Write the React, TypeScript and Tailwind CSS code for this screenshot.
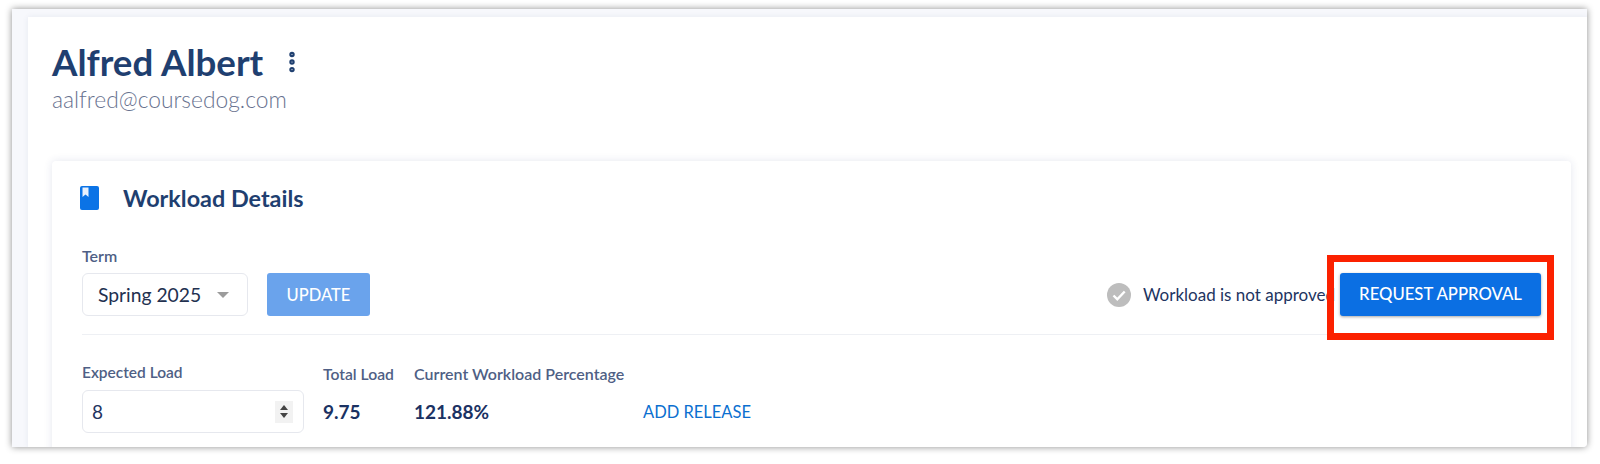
import { EllipsisVertical } from "lucide-react";

const lato = "font-['Lato','Noto_Sans',sans-serif]";

function BookIcon() {
  return (
    <svg width="19" height="24" viewBox="0 0 19 24" className="-ml-[2px] shrink-0">
      <rect x="0" y="0" width="19" height="24" rx="2" fill="#0b73e6" />
      <path d="M2.5 1.5h6v9.5l-3-2.4-3 2.4z" fill="#e8f1fd" />
    </svg>
  );
}

function CheckBadge() {
  return (
    <svg width="24" height="24" viewBox="0 0 24 24" className="shrink-0">
      <circle cx="12" cy="12" r="12" fill="#bdbdbd" />
      <path d="M6.5 12.5l3.8 3.8 7.4-7.8" fill="none" stroke="#ffffff" strokeWidth="2.4" />
    </svg>
  );
}

function Spinner() {
  return (
    <span className="flex h-[22px] w-[18px] flex-col items-center justify-center gap-[3px] bg-[#f2f2f2]">
      <span className="h-0 w-0 border-x-[4px] border-b-[5px] border-x-transparent border-b-[#444444]" />
      <span className="h-0 w-0 border-x-[4px] border-t-[5px] border-x-transparent border-t-[#444444]" />
    </span>
  );
}

export default function App() {
  return (
    <div className={`h-[464px] w-[1600px] overflow-hidden bg-white pl-3 pt-[9px] ${lato}`}>
      <div className="h-[438px] w-[1575px] overflow-hidden rounded-br-sm bg-[#f7f8fc] pl-4 pt-2 shadow-[0_0_7px_rgba(0,0,0,0.45)]">
        <div className="h-full bg-white pl-6 pr-4 pt-[22px] shadow-[0_0_6px_rgba(40,60,120,0.08)]">
          <div className="flex items-center gap-[16px]">
            <h1 className="text-[36.7px] font-bold leading-[46px] text-[#1f3f70]">Alfred Albert</h1>
            <EllipsisVertical size={26} strokeWidth={3} className="text-[#1f3f70]" />
          </div>
          <p className="text-[22.8px] font-light leading-[28px] text-[#68728f]">aalfred@coursedog.com</p>

          <div className="mt-[48px] h-[300px] rounded-sm bg-white px-[30px] pt-[22px] shadow-[0_0_8px_rgba(40,60,120,0.12)]">
            <div className="flex items-center gap-6">
              <BookIcon />
              <h2 className="text-[23.4px] font-bold leading-[30px] text-[#1f3f70]">Workload Details</h2>
            </div>

            <div className="mt-[33px] flex items-end justify-between border-b border-[#eef0f4] pb-[18px]">
              <div>
                <label className="block text-[16px] font-semibold leading-[20px] text-[#4f5f85]">Term</label>
                <div className="mt-[7px] flex items-center gap-[19px]">
                  <div className="flex h-[43px] w-[166px] items-center justify-between rounded-md border border-[#e6e8ee] pl-[15px] pr-[18px] pt-[1px] text-[19.3px] text-[#22304f]">
                    Spring 2025
                    <span className="h-0 w-0 border-x-[6px] border-t-[6px] border-x-transparent border-t-[#9c9c9c]" />
                  </div>
                  <button className="h-[43px] w-[103px] rounded-[3px] bg-[#6aa3ec] pt-[1px] text-[16.5px] font-medium text-white">UPDATE</button>
                </div>
              </div>
              <div className="flex items-center gap-3">
                <CheckBadge />
                <span className="text-[17px] text-[#22345f]">Workload is not approved</span>
                <div className="relative -ml-[7px]">
                  <button className="h-[43px] w-[201px] rounded-[3px] bg-[#0b6fe3] pt-[1px] text-[16.7px] font-medium text-white shadow-[0_1px_3px_rgba(0,0,0,0.35)]">REQUEST APPROVAL</button>
                  <div className="absolute -inset-x-[13px] -bottom-[24px] -top-[18px] border-[7px] border-[#fb2100]" />
                </div>
              </div>
            </div>

            <div className="mt-[27px] flex items-start">
              <div className="w-[222px]">
                <label className="block text-[15.5px] font-semibold leading-[20px] text-[#4f5f85]">Expected Load</label>
                <div className="mt-[8px] flex h-[43px] items-center justify-between rounded-md border border-[#e6e8ee] pl-[9px] pr-[10px] text-[19px] text-[#22345f]">
                  <span className="pt-[2px]">8</span>
                  <Spinner />
                </div>
              </div>
              <div className="ml-[19px] w-[91px]">
                <div className="pt-[2px] text-[15.7px] font-semibold leading-[20px] text-[#4f5f85]">Total Load</div>
                <div className="mt-[16px] text-[19px] font-bold leading-[24px] text-[#1b3263]">9.75</div>
              </div>
              <div className="w-[229px]">
                <div className="pt-[2px] text-[16px] font-semibold leading-[20px] text-[#4f5f85]">Current Workload Percentage</div>
                <div className="mt-[16px] text-[19px] font-bold leading-[24px] text-[#1b3263]">121.88%</div>
              </div>
              <a className="pt-[38px] text-[16.5px] leading-[24px] text-[#0b6fd0]">ADD RELEASE</a>
            </div>
          </div>
        </div>
      </div>
    </div>
  );
}
